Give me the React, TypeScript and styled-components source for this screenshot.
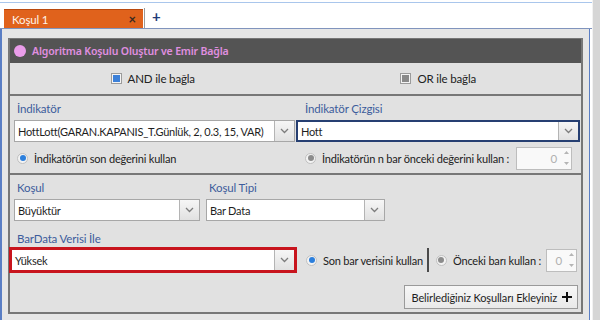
import React from 'react';
import styled, { createGlobalStyle } from 'styled-components';

const GlobalStyle = createGlobalStyle`
  html, body {
    margin: 0;
    padding: 0;
    background: #fff;
  }
  body {
    font-family: Lato, "Noto Sans", sans-serif;
    font-size: 11px;
    letter-spacing: -0.15px;
    color: #222;
  }
`;

const Frame = styled.div`
  width: 600px;
  height: 320px;
  display: flex;
  overflow: hidden;
  background: #fff;
`;

const Main = styled.div`
  width: 593px;
  display: flex;
  flex-direction: column;
  padding-top: 2px;
  box-sizing: border-box;
`;

const Scrollbar = styled.div`
  width: 7px;
  background: #d6d6d6;
  border-left: 1px solid #f2f2f2;
`;

const TabStrip = styled.div`
  height: 25px;
  border-top: 1px solid #a9c6ec;
  border-bottom: 1px solid #8094bd;
  display: flex;
  align-items: flex-end;
`;

const Tab = styled.div`
  margin-left: 4px;
  width: 139px;
  height: 19px;
  box-sizing: border-box;
  border-top: 1px solid #b9490f;
  background: #e0621c;
  color: #fff4ea;
  display: flex;
  align-items: center;
  justify-content: space-between;
  padding: 0 7px 0 8px;
  font-size: 11.5px;
`;

const TabClose = styled.span`
  color: #3a2a20;
  font-size: 13px;
  font-weight: bold;
`;

const TabDivider = styled.div`
  width: 1px;
  height: 20px;
  background: #9a9a9a;
  margin-left: 1px;
`;

const AddTab = styled.span`
  margin-left: 7px;
  margin-bottom: 4px;
  color: #1f3c78;
  font-weight: bold;
  font-size: 15px;
  line-height: 15px;
`;

const Content = styled.div`
  flex: 1;
  background: #e6e6e6;
  border-left: 2px solid #5a7ec4;
  border-right: 1px solid #5a7ec4;
  margin-right: 2px;
  padding: 9px 6px 0;
`;

const Panel = styled.div`
  background: #e1e1e1;
  border: 2px solid #777;
  border-top-width: 1px;
`;

const PanelHeader = styled.div`
  height: 24px;
  background: #545454;
  display: flex;
  align-items: center;
  padding-left: 4px;
  gap: 6px;
  color: #e08fe0;
  font-family: "Noto Sans", sans-serif;
  font-weight: 600;
  font-size: 10.5px;
  letter-spacing: -0.15px;
`;

const Dot = styled.span`
  width: 12px;
  height: 12px;
  border-radius: 50%;
  background: #ea9dea;
`;

const CheckRow = styled.div`
  height: 31px;
  display: grid;
  grid-template-columns: 1fr 1fr;
  border-bottom: 2px solid #777;
`;

const CheckItem = styled.label`
  display: flex;
  align-items: center;
  justify-content: center;
  gap: 6px;
  color: #222;
  font-size: 11.5px;
`;

const CheckBox = styled.span<{ $fill: string }>`
  width: 9px;
  height: 9px;
  border: 1px solid #9b9b9b;
  background: #f4f4f4;
  display: flex;
  align-items: center;
  justify-content: center;

  &::after {
    content: '';
    width: 7px;
    height: 7px;
    background: ${(p) => p.$fill};
  }
`;

const Section = styled.div<{ $border?: boolean }>`
  padding: 5px 1px 3px 4px;
  border-bottom: ${(p) => (p.$border ? '2px solid #777' : 'none')};
`;

const TwoCols = styled.div`
  display: grid;
  grid-template-columns: 281px minmax(0, 1fr);
  column-gap: 3px;
`;

const Field = styled.div<{ $w?: number }>`
  display: flex;
  flex-direction: column;
  min-width: 0;
  width: ${(p) => (p.$w ? `${p.$w}px` : 'auto')};
`;

const Label = styled.div<{ $gap?: number; $indent?: number }>`
  height: 16px;
  line-height: 16px;
  padding-left: ${(p) => p.$indent ?? 3}px;
  margin-top: ${(p) => p.$gap ?? 0}px;
  margin-bottom: ${(p) => (p.$gap ? 0 : 3)}px;
  color: #3c5c9c;
  font-size: 11.5px;
`;

const ComboBox = styled.div<{ $tone?: 'focus' | 'error' }>`
  height: ${(p) => (p.$tone === 'error' ? 26 : 22)}px;
  box-sizing: border-box;
  display: flex;
  background: #fff;
  border: ${(p) =>
    p.$tone === 'focus' ? '2px solid #263f72' : p.$tone === 'error' ? '3px solid #c8141d' : '1px solid #a7a7a7'};
  margin-left: ${(p) => (p.$tone === 'focus' ? '-2px' : p.$tone === 'error' ? '-5px' : '0')};
  width: ${(p) => (p.$tone === 'error' ? '288px' : 'auto')};
  flex-shrink: 0;
`;

const ComboText = styled.div`
  flex: 1;
  display: flex;
  align-items: center;
  padding-left: 3px;
  white-space: nowrap;
  overflow: hidden;
  color: #1e1e1e;
  font-size: 11px;
  letter-spacing: -0.25px;
`;

const ComboButton = styled.div`
  width: 19px;
  border-left: 1px solid #b4b4b4;
  background: linear-gradient(#f6f6f6, #e1e1e1);
  display: flex;
  align-items: center;
  justify-content: center;
`;

const OptionRow = styled.div`
  height: 24px;
  margin-top: 4px;
  display: flex;
  align-items: center;
`;

const RadioItem = styled.div<{ $ml?: number }>`
  display: flex;
  align-items: center;
  gap: 6px;
  margin-left: ${(p) => p.$ml ?? 0}px;
  white-space: nowrap;
  color: #222;
  font-size: 11px;
  letter-spacing: -0.2px;
`;

const Radio = styled.span<{ $on?: boolean }>`
  width: 11px;
  height: 11px;
  box-sizing: border-box;
  border-radius: 50%;
  border: 1px solid #c0c0c0;
  background: #f3f3f3;
  display: flex;
  align-items: center;
  justify-content: center;

  &::after {
    content: '';
    width: 6px;
    height: 6px;
    border-radius: 50%;
    background: ${(p) => (p.$on ? '#2c7fdc' : '#8c8c8c')};
  }
`;

const Spin = styled.div<{ $w: number; $ml: number }>`
  width: ${(p) => p.$w}px;
  height: 23px;
  box-sizing: border-box;
  border: 1px solid #bdbdbd;
  background: #f9f9f9;
  margin-left: ${(p) => p.$ml}px;
  display: flex;
  align-items: center;
  justify-content: flex-end;
  color: #b0b0b0;
  font-size: 11.5px;
  flex-shrink: 0;
`;

const SpinArrows = styled.div`
  width: 10px;
  height: 100%;
  display: flex;
  flex-direction: column;
  align-items: center;
  justify-content: space-around;
  margin-left: 4px;
`;

const Row = styled.div`
  display: flex;
  gap: 6px;
`;

const BarRow = styled.div`
  display: flex;
  align-items: center;
`;

const VSep = styled.span`
  width: 2px;
  height: 24px;
  background: #4a4a4a;
  margin: 0 7px 0 4px;
`;

const ButtonRow = styled.div`
  display: flex;
  justify-content: flex-end;
  margin-top: 12px;
  padding-right: 2px;
`;

const AddButton = styled.button`
  height: 24px;
  padding: 0 5px 0 7px;
  border: 1px solid #9a9a9a;
  background: linear-gradient(#f7f7f7, #e9e9e9);
  font-family: inherit;
  font-size: 11px;
  letter-spacing: -0.15px;
  color: #1e1e1e;
  display: flex;
  align-items: center;
  gap: 5px;
`;

const Chevron = () => (
  <svg width="9" height="6" viewBox="0 0 9 6">
    <path d="M1 1 L4.5 4.5 L8 1" fill="none" stroke="#7d7d7d" strokeWidth="1.3" />
  </svg>
);

const Plus = () => (
  <svg width="10" height="10" viewBox="0 0 10 10">
    <path d="M5 0 V10 M0 5 H10" stroke="#111" strokeWidth="2" />
  </svg>
);

const Combo = ({ value, tone }: { value: string; tone?: 'focus' | 'error' }) => (
  <ComboBox $tone={tone}>
    <ComboText>{value}</ComboText>
    <ComboButton>
      <Chevron />
    </ComboButton>
  </ComboBox>
);

const SpinBox = ({ w, ml }: { w: number; ml: number }) => (
  <Spin $w={w} $ml={ml}>
    0
    <SpinArrows>
      <svg width="5" height="3" viewBox="0 0 5 3">
        <path d="M0 3 L2.5 0 L5 3Z" fill="#b5b5b5" />
      </svg>
      <svg width="5" height="3" viewBox="0 0 5 3">
        <path d="M0 0 L2.5 3 L5 0Z" fill="#b5b5b5" />
      </svg>
    </SpinArrows>
  </Spin>
);

export default function App() {
  return (
    <>
      <GlobalStyle />
      <Frame>
        <Main>
          <TabStrip>
            <Tab>
              <span>Koşul 1</span>
              <TabClose>×</TabClose>
            </Tab>
            <TabDivider />
            <AddTab>+</AddTab>
          </TabStrip>
          <Content>
            <Panel>
              <PanelHeader>
                <Dot />
                Algoritma Koşulu Oluştur ve Emir Bağla
              </PanelHeader>
              <CheckRow>
                <CheckItem>
                  <CheckBox $fill="#3c80d8" />
                  AND ile bağla
                </CheckItem>
                <CheckItem>
                  <CheckBox $fill="#8a8a8a" />
                  OR ile bağla
                </CheckItem>
              </CheckRow>

              <Section $border>
                <TwoCols>
                  <Field>
                    <Label>İndikatör</Label>
                    <Combo value="HottLott(GARAN.KAPANIS_T.Günlük, 2, 0.3, 15, VAR)" />
                    <OptionRow>
                      <RadioItem $ml={3}>
                        <Radio $on />
                        İndikatörün son değerini kullan
                      </RadioItem>
                    </OptionRow>
                  </Field>
                  <Field>
                    <Label $indent={7}>İndikatör Çizgisi</Label>
                    <Combo value="Hott" tone="focus" />
                    <OptionRow>
                      <RadioItem $ml={7}>
                        <Radio />
                        İndikatörün n bar önceki değerini kullan :
                      </RadioItem>
                      <SpinBox w={56} ml={7} />
                    </OptionRow>
                  </Field>
                </TwoCols>
              </Section>

              <Section>
                <Row>
                  <Field $w={186}>
                    <Label>Koşul</Label>
                    <Combo value="Büyüktür" />
                  </Field>
                  <Field $w={179}>
                    <Label>Koşul Tipi</Label>
                    <Combo value="Bar Data" />
                  </Field>
                </Row>
                <Field>
                  <Label $gap={10}>BarData Verisi İle</Label>
                  <BarRow>
                    <Combo value="Yüksek" tone="error" />
                    <RadioItem $ml={9}>
                      <Radio $on />
                      Son bar verisini kullan
                    </RadioItem>
                    <VSep />
                    <RadioItem>
                      <Radio />
                      Önceki barı kullan :
                    </RadioItem>
                    <SpinBox w={31} ml={5} />
                  </BarRow>
                </Field>
                <ButtonRow>
                  <AddButton>
                    Belirlediğiniz Koşulları Ekleyiniz
                    <Plus />
                  </AddButton>
                </ButtonRow>
              </Section>
            </Panel>
          </Content>
        </Main>
        <Scrollbar />
      </Frame>
    </>
  );
}
